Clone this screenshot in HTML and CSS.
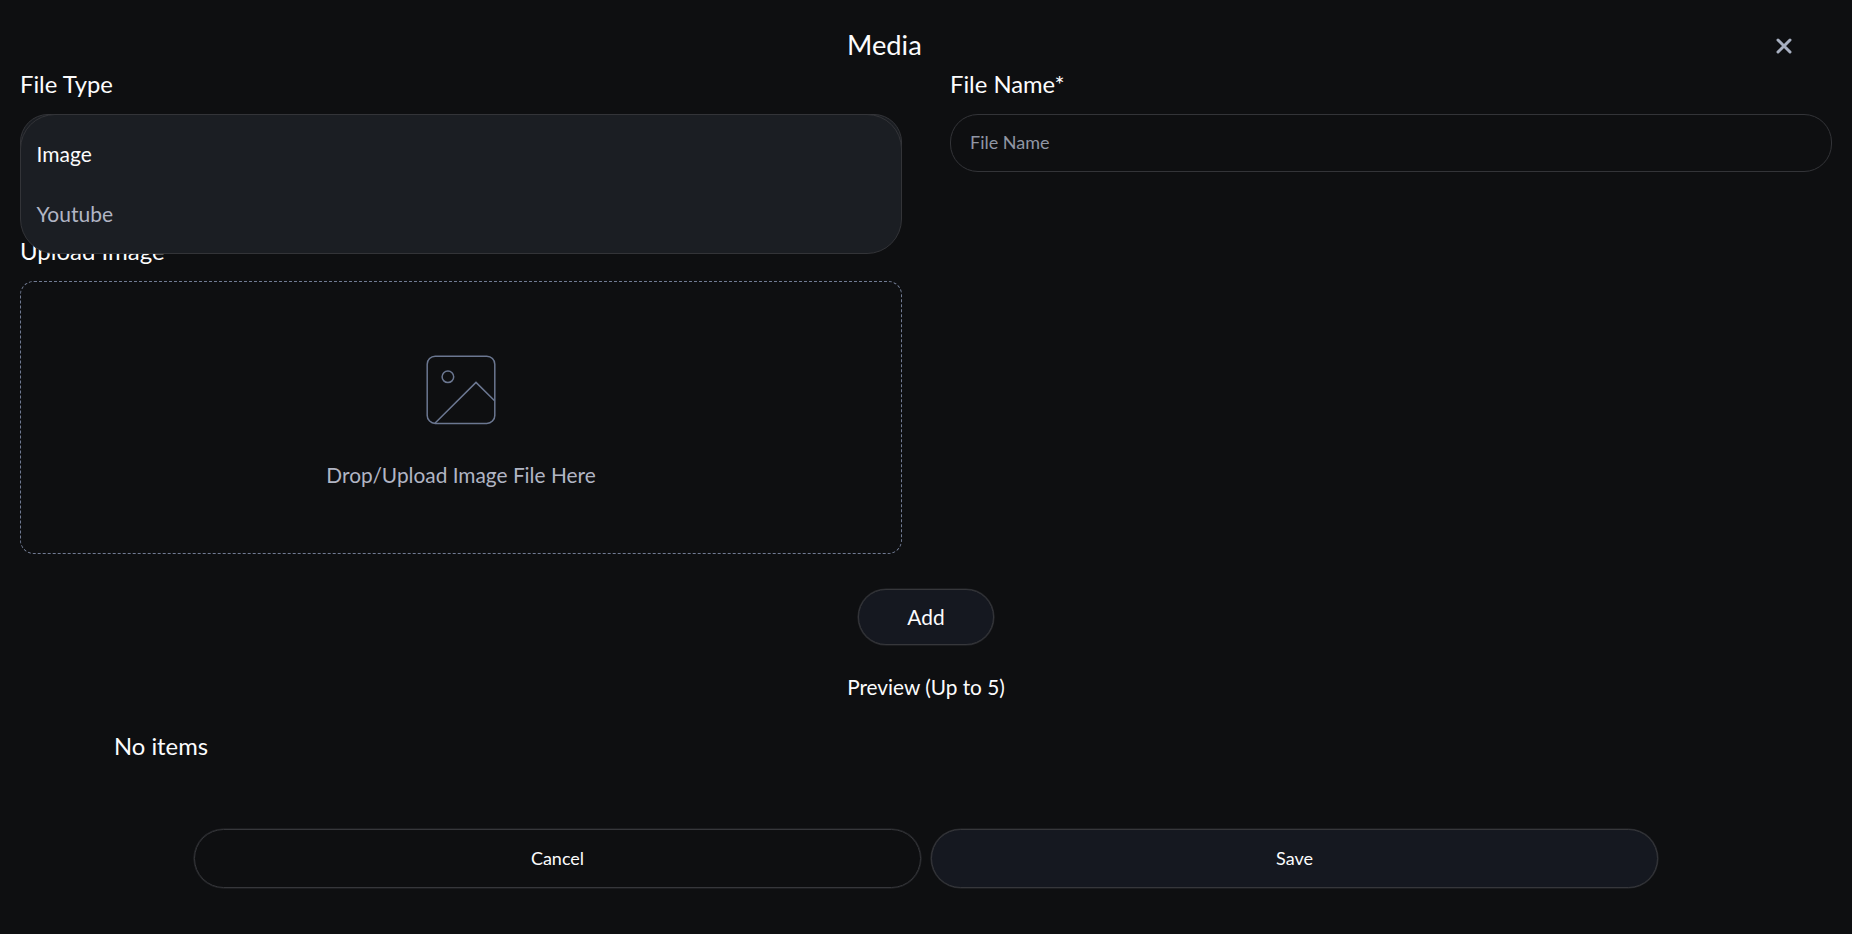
FILE: index.html
```html
<!DOCTYPE html>
<html lang="en">
<head>
<meta charset="utf-8">
<title>Media</title>
<link rel="stylesheet" href="styles.css">
</head>
<body>
<main class="dialog">
  <header class="dialog-header">
    <h1 class="title">Media</h1>
    <button class="close" type="button" aria-label="Close">
      <svg width="16" height="16" viewBox="0 0 16 16"><path d="M2 2 14 14M14 2 2 14"/></svg>
    </button>
  </header>
  <div class="form">
    <section class="column">
      <label class="label">File Type</label>
      <div class="select">
        <ul class="menu">
          <li class="option selected">Image</li>
          <li class="option">Youtube</li>
        </ul>
      </div>
      <label class="label upload-label">Upload Image</label>
      <div class="dropzone">
        <svg class="picture" width="72" height="72" viewBox="0 0 72 72">
          <rect x="2.2" y="2.2" width="67.6" height="67.2" rx="8"/>
          <circle cx="22.9" cy="22.8" r="5.8"/>
          <path d="M9.9 69.2 51 28.4 69.6 46.8"/>
        </svg>
        <span class="drop-text">Drop/Upload Image File Here</span>
      </div>
    </section>
    <section class="column">
      <label class="label" for="name">File Name*</label>
      <input class="input" id="name" type="text" placeholder="File Name">
    </section>
  </div>
  <button class="button add" type="button">Add</button>
  <h2 class="preview">Preview (Up to 5)</h2>
  <p class="empty">No items</p>
  <footer class="actions">
    <button class="button" type="button">Cancel</button>
    <button class="button filled" type="button">Save</button>
  </footer>
</main>
</body>
</html>
```
FILE: styles.css
```css
* { box-sizing: border-box; }

body {
  margin: 0;
  background: #0e0f11;
  color: #fcfcfd;
  font-family: Lato, "Open Sans", sans-serif;
  overflow: hidden;
}

.dialog {
  display: flex;
  flex-direction: column;
  height: 934px;
  padding: 25px 20px 0;
}

.dialog-header {
  display: grid;
  grid-template-columns: 1fr 158px 1fr;
  align-items: center;
  height: 39px;
}

.title {
  grid-column: 2;
  margin: 0;
  font-size: 27.3px;
  font-weight: 400;
  line-height: 39px;
}

.close {
  justify-self: end;
  display: flex;
  margin: 2px 40px 0 0;
  padding: 0;
  border: 0;
  background: none;
}

.close svg {
  fill: none;
  stroke: #a7afc0;
  stroke-width: 3;
  stroke-linecap: round;
}

.form {
  display: grid;
  grid-template-columns: 1fr 1fr;
  gap: 48px;
}

.column {
  display: flex;
  flex-direction: column;
}

.label {
  height: 40px;
  margin-bottom: 10px;
  font-size: 23.8px;
  line-height: 40px;
}

.select,
.input {
  width: 100%;
  height: 58px;
  border: 1px solid #333438;
  border-radius: 28px;
  background: transparent;
}

.select {
  position: relative;
  background: #1b1e23;
}

.menu {
  position: absolute;
  inset: -1px -1px auto;
  height: 140px;
  margin: 0;
  padding: 9px 15.5px;
  border: 1px solid #333438;
  border-radius: 35px;
  background: #1b1e23;
  list-style: none;
}

.option {
  height: 60px;
  font-size: 21px;
  line-height: 60px;
  color: #b1b5c4;
}

.selected { color: #fcfcfd; }

.input {
  padding: 0 19px 2px;
  color: inherit;
  font: 18px Lato, sans-serif;
}

.input::placeholder { color: #9096a4; opacity: 1; }

.upload-label { margin-top: 59px; margin-bottom: 10px; font-size: 24px; }

.dropzone {
  display: flex;
  flex-direction: column;
  align-items: center;
  height: 273px;
  padding-top: 72px;
  border: 1px dashed #717b93;
  border-radius: 14px;
}

.picture {
  fill: none;
  stroke: #6b7791;
  stroke-width: 1.5;
}

.drop-text {
  margin-top: 29px;
  font-size: 20.85px;
  line-height: 40px;
  color: #b1b5c4;
}

.button {
  height: 59px;
  padding: 0 6px 2px;
  border: 1px solid #36373b;
  border-radius: 30px;
  box-shadow: 0 0 0 0.6px #292a2e;
  background: transparent;
  color: #fcfcfd;
  font: 18px Lato, sans-serif;
}

.filled,
.add { background: #151820; }

.add {
  align-self: center;
  width: 136px;
  height: 56px;
  margin-top: 35px;
  font-size: 20.9px;
}

.preview {
  align-self: center;
  margin: 22px 0 0;
  font-size: 20.8px;
  font-weight: 400;
  line-height: 40px;
}

.empty {
  margin: 19px 0 0 94px;
  font-size: 23.8px;
  line-height: 40px;
}

.actions {
  display: grid;
  grid-template-columns: 1fr 1fr;
  gap: 10px;
  width: 1464px;
  margin: 63px auto 0;
}
```
